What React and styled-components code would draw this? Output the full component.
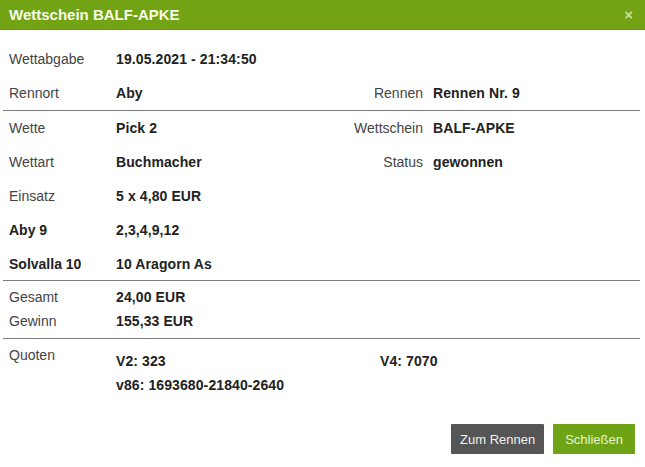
import React from 'react'
import styled, { createGlobalStyle } from 'styled-components'

const GlobalStyle = createGlobalStyle`
  html, body {
    margin: 0;
    padding: 0;
    background: #fff;
  }
  body {
    font-family: "Liberation Sans", Arial, sans-serif;
    font-size: 14px;
    color: #333;
  }
`

const Dialog = styled.div`
  width: 645px;
  height: 467px;
  display: flex;
  flex-direction: column;
  background: #fff;
`

const Header = styled.div`
  height: 30px;
  flex: none;
  display: flex;
  align-items: center;
  justify-content: space-between;
  padding: 0 12px 0 9px;
  background: #71a315;
  border-bottom: 1px solid #679a10;
  box-sizing: border-box;

  h3 {
    margin: 0;
    font-size: 15px;
    font-weight: bold;
    color: #f6fbe9;
  }
  button {
    border: none;
    background: none;
    padding: 0;
    font-family: inherit;
    font-size: 15px;
    font-weight: bold;
    color: #c9e19a;
    cursor: pointer;
    line-height: 1;
  }
`

const Body = styled.div`
  padding: 12px 5px 0 3px;
`

const Section = styled.div`
  border-bottom: ${p => (p.$last ? 'none' : '1px solid #7a7a7a')};
  padding: ${p => p.$pad || '0'};
`

const Row = styled.div`
  display: grid;
  grid-template-columns: 107px 217px 100px 1fr;
  align-items: center;
  height: ${p => p.$h || 34}px;
  padding-left: 6px;
`

const Label = styled.span`
  font-weight: ${p => (p.$bold ? 'bold' : 'normal')};
  color: ${p => (p.$bold ? '#222' : '#444')};
`

const RightLabel = styled.span`
  text-align: right;
  padding-right: 10px;
  color: #444;
`

const Value = styled.span`
  font-weight: bold;
  color: #222;
  letter-spacing: 0.1px;
`

const QuotenRow = styled.div`
  display: grid;
  grid-template-columns: 107px 1fr;
  padding: 8px 0 0 6px;
  line-height: 16px;
`

const QuotenGrid = styled.div`
  display: grid;
  grid-template-columns: 264px 1fr;
  grid-auto-rows: 24px;
  padding-top: 2px;
  align-items: center;
`

const Footer = styled.div`
  display: flex;
  justify-content: flex-end;
  gap: 9px;
  padding: 27px 10px 0 0;
`

const Button = styled.button`
  height: 30px;
  padding: 0 ${p => p.$px || 9}px;
  border: none;
  border-radius: 1px;
  background: ${p => (p.$primary ? '#6ea316' : '#555555')};
  color: ${p => (p.$primary ? '#e9f5d0' : '#f2f2f2')};
  font-family: "Liberation Sans", Arial, sans-serif;
  font-size: 13px;
  cursor: pointer;
`

export default function App() {
  return (
    <>
      <GlobalStyle />
      <Dialog>
        <Header>
          <h3>Wettschein BALF-APKE</h3>
          <button>×</button>
        </Header>
        <Body>
          <Section>
            <Row>
              <Label>Wettabgabe</Label>
              <Value>19.05.2021 - 21:34:50</Value>
            </Row>
            <Row>
              <Label>Rennort</Label>
              <Value>Aby</Value>
              <RightLabel>Rennen</RightLabel>
              <Value>Rennen Nr. 9</Value>
            </Row>
          </Section>
          <Section>
            <Row>
              <Label>Wette</Label>
              <Value>Pick 2</Value>
              <RightLabel>Wettschein</RightLabel>
              <Value>BALF-APKE</Value>
            </Row>
            <Row>
              <Label>Wettart</Label>
              <Value>Buchmacher</Value>
              <RightLabel>Status</RightLabel>
              <Value>gewonnen</Value>
            </Row>
            <Row>
              <Label>Einsatz</Label>
              <Value>5 x 4,80 EUR</Value>
            </Row>
            <Row>
              <Label $bold>Aby 9</Label>
              <Value>2,3,4,9,12</Value>
            </Row>
            <Row $h={33}>
              <Label $bold>Solvalla 10</Label>
              <Value>10 Aragorn As</Value>
            </Row>
          </Section>
          <Section $pad="4px 0 5px">
            <Row $h={24}>
              <Label>Gesamt</Label>
              <Value>24,00 EUR</Value>
            </Row>
            <Row $h={24}>
              <Label>Gewinn</Label>
              <Value>155,33 EUR</Value>
            </Row>
          </Section>
          <Section $last>
            <QuotenRow>
              <Label>Quoten</Label>
              <QuotenGrid>
                <Value>V2: 323</Value>
                <Value>V4: 7070</Value>
                <Value>v86: 1693680-21840-2640</Value>
              </QuotenGrid>
            </QuotenRow>
          </Section>
        </Body>
        <Footer>
          <Button>Zum Rennen</Button>
          <Button $primary $px={12}>Schließen</Button>
        </Footer>
      </Dialog>
    </>
  )
}
